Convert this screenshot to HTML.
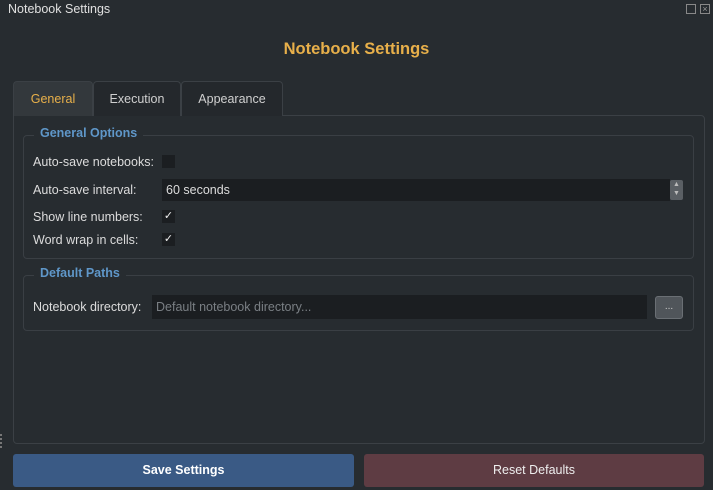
<!DOCTYPE html><html><head><style>
*{box-sizing:border-box;margin:0;padding:0}
body{width:713px;height:490px;background:#272c30;font-family:"Liberation Sans",sans-serif;font-size:12px;color:#dcdcdc;position:relative;overflow:hidden}
.a{position:absolute}
.tab{position:absolute;top:81px;height:35px;border:1px solid #3b4045;border-bottom:none;border-radius:4px 4px 0 0;text-align:center;line-height:34px;font-size:12.5px;color:#d0d0d0;background:#24282c}
.gb{position:absolute;left:23px;width:671px;border:1px solid #3a3f44;border-radius:4px}
.gt{position:absolute;background:#272c30;color:#5f97c9;font-weight:bold;font-size:12.5px;padding:0 6px}
.lbl{position:absolute;left:33px;font-size:12.5px;color:#dcdcdc}
.cb{position:absolute;left:162px;width:13px;height:13px;background:#1b1e21;font-size:11px;line-height:13px;text-align:center;color:#eee}
</style></head><body>
<div class="a" style="left:8px;top:2px;font-size:12.5px;color:#e0e0e0">Notebook Settings</div>
<div class="a" style="left:686px;top:4px;width:10px;height:10px;border:1px solid #888"></div>
<div class="a" style="left:700px;top:4px;width:10px;height:10px;border:1px solid #888;font-size:9px;line-height:8px;text-align:center;color:#999">×</div>
<div class="a" style="left:0;width:713px;top:40px;text-align:center;font-weight:bold;font-size:16.5px;color:#e8b04a">Notebook Settings</div>
<div class="a" style="left:0;top:434px;width:3px;height:14px;border-left:2px dotted #777"></div>
<div class="a" style="left:13px;top:115px;width:692px;height:329px;border:1px solid #3b4045;border-radius:0 4px 4px 4px"></div>
<div class="tab" style="left:13px;width:80px;background:#33383c;color:#e8b04a">General</div>
<div class="tab" style="left:93px;width:88px">Execution</div>
<div class="tab" style="left:181px;width:102px">Appearance</div>
<div class="gb" style="top:135px;height:124px"></div>
<div class="gt" style="left:34px;top:126px">General Options</div>
<div class="lbl" style="top:155px">Auto-save notebooks:</div><div class="cb" style="top:155px"></div>
<div class="lbl" style="top:183px">Auto-save interval:</div>
<div class="a" style="left:162px;top:179px;width:508px;height:22px;background:#1b1e21;padding-left:4px;line-height:22px;font-size:12.5px">60 seconds</div>
<div class="a" style="left:670px;top:180px;width:13px;height:20px;background:#5a5f64;border-radius:2px;font-size:7px;line-height:9px;text-align:center;color:#bbb">▲<br>▼</div>
<div class="lbl" style="top:210px">Show line numbers:</div><div class="cb" style="top:210px">✓</div>
<div class="lbl" style="top:233px">Word wrap in cells:</div><div class="cb" style="top:233px">✓</div>
<div class="gb" style="top:275px;height:56px"></div>
<div class="gt" style="left:34px;top:266px">Default Paths</div>
<div class="lbl" style="top:300px">Notebook directory:</div>
<div class="a" style="left:152px;top:295px;width:495px;height:24px;background:#1b1e21;padding-left:4px;line-height:24px;font-size:12.5px;color:#7a7f84">Default notebook directory...</div>
<div class="a" style="left:655px;top:296px;width:28px;height:23px;background:#50555a;border:1px solid #6a6f74;border-radius:3px;text-align:center;line-height:20px;color:#ccc;font-size:10px">...</div>
<div class="a" style="left:13px;top:454px;width:341px;height:33px;background:#3a5a85;border-radius:3px;text-align:center;line-height:33px;font-weight:bold;font-size:12.5px;color:#fff">Save Settings</div>
<div class="a" style="left:364px;top:454px;width:340px;height:33px;background:#5e3c43;border-radius:3px;text-align:center;line-height:33px;font-size:12.5px;color:#eee">Reset Defaults</div>
</body></html>
